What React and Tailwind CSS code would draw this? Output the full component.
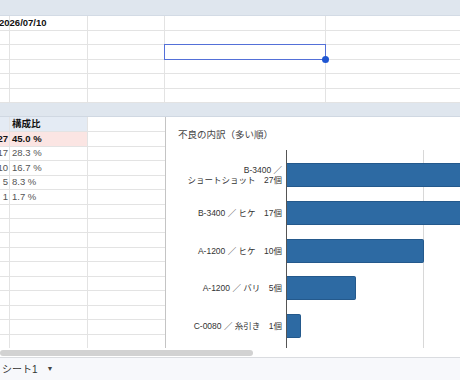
import React from "react";

const font = { fontFamily: '"Liberation Sans", Arial, "Noto Sans CJK JP", sans-serif' };

// top block cells: widths of the visible columns
const cols = "grid grid-cols-[10px_78px_77px_161px_134px]";

const summary = [
  { n: "27", p: "45.0 %", hot: true },
  { n: "17", p: "28.3 %" },
  { n: "10", p: "16.7 %" },
  { n: "5", p: "8.3 %" },
  { n: "1", p: "1.7 %" },
];

const defects = [
  { label: ["B-3400 ／", "ショートショット　27個"], count: 27 },
  { label: ["B-3400 ／ ヒケ　17個"], count: 17 },
  { label: ["A-1200 ／ ヒケ　10個"], count: 10 },
  { label: ["A-1200 ／ バリ　5個"], count: 5 },
  { label: ["C-0080 ／ 糸引き　1個"], count: 1 },
];

function TopRow({ children, selected }) {
  return (
    <div className={`${cols} h-[14.5px]`}>
      <div className="border-r border-b border-[#e3e3e3] relative overflow-visible">{children}</div>
      <div className="border-r border-b border-[#e3e3e3]" />
      <div className="border-r border-b border-[#e3e3e3]" />
      <div className={`border-r border-b border-[#e3e3e3] relative ${selected ? "z-10" : ""}`}>
        {selected && (
          <>
            <div className="absolute inset-[-1px] border border-[#5470d8]" />
            <div className="absolute right-[-4px] bottom-[-4px] w-[7px] h-[7px] rounded-full bg-[#1f56d2]" />
          </>
        )}
      </div>
      <div className="border-b border-[#e3e3e3]" />
    </div>
  );
}

function LeftRow({ n, p, hot, head }) {
  const bg = head ? "bg-[#e4ebf4]" : hot ? "bg-[#fbe5e3]" : "";
  const txt = head || hot ? "font-bold text-[#111]" : "text-[#555]";
  return (
    <div className="grid grid-cols-[10px_78px_77px] h-[14.5px] text-[9.5px] leading-[14px]">
      <div className={`border-r border-b border-[#e3e3e3] relative ${bg}`}>
        <span className={`absolute right-[1px] top-0 ${txt}`}>{n}</span>
      </div>
      <div className={`border-r border-b border-[#e3e3e3] pl-[2px] ${bg} ${txt}`}>{p}</div>
      <div className="border-b border-[#e3e3e3]" />
    </div>
  );
}

export default function App() {
  const scale = 13.7;
  return (
    <div className="w-[460px] h-[380px] overflow-hidden bg-white flex flex-col" style={font}>
      {/* frozen header band */}
      <div className="h-[16px] bg-[#dfe6ee] border-b border-[#d3dbe5]" />

      {/* upper cells */}
      <div>
        <TopRow>
          <span className="absolute left-[-1px] top-0 text-[9.5px] leading-[14px] font-bold text-[#111] whitespace-nowrap">
            2026/07/10
          </span>
        </TopRow>
        <TopRow />
        <TopRow selected />
        <TopRow />
        <TopRow />
        <TopRow />
      </div>

      {/* second band */}
      <div className="h-[14px] bg-[#dfe6ee] border-b border-[#d0d8e2]" />

      {/* lower area: cells + chart */}
      <div className="h-[231px] flex overflow-hidden">
        <div className="w-[165px] shrink-0">
          <LeftRow n="" p="構成比" head />
          {summary.map((r) => (
            <LeftRow key={r.p} n={r.n} p={r.p} hot={r.hot} />
          ))}
          {Array.from({ length: 10 }).map((_, i) => (
            <LeftRow key={i} n="" p="" />
          ))}
        </div>

        {/* chart */}
        <div className="flex-1 bg-white border-l border-[#c4c4c4] flex flex-col">
          <div className="h-[33px] pl-[12px] pt-[11px] text-[9.5px] leading-[12px] text-[#444]" style={{ fontFamily: '"Noto Sans CJK JP", sans-serif' }}>
            不良の内訳（多い順）
          </div>
          <div className="flex flex-1">
            <div className="w-[120px] shrink-0 flex flex-col pt-[13px] gap-[13.75px]">
              {defects.map((d, i) => (
                <div key={i} className="h-[24px] flex flex-col justify-center items-end pr-[4px] text-[8.5px] leading-[10px] text-[#333] whitespace-nowrap">
                  {d.label.map((l) => (
                    <span key={l}>{l}</span>
                  ))}
                </div>
              ))}
            </div>
            <div className="relative flex-1 border-l border-[#555] overflow-hidden">
              <div className="absolute left-[136px] top-0 bottom-0 w-px bg-[#d8d8d8]" />
              <div className="relative flex flex-col pt-[13px] gap-[13.75px]">
                {defects.map((d, i) => (
                  <div
                    key={i}
                    className="h-[24px] bg-[#2d6aa3] rounded-r-[2px] border border-l-0 border-[#24598c]"
                    style={{ width: d.count * scale }}
                  />
                ))}
              </div>
            </div>
          </div>
        </div>
      </div>

      {/* horizontal scrollbar */}
      <div className="h-[9px] bg-white flex items-center">
        <div className="w-[253px] h-[6px] rounded-full bg-[#d2d2d2]" />
      </div>

      {/* sheet tabs */}
      <div className="flex-1 border-t border-[#dadce0] bg-[#f7f8fb] flex items-center pl-[2px] gap-[9px] text-[10px] text-[#333]" style={{ fontFamily: '"Liberation Sans", "Noto Sans CJK JP", sans-serif' }}>
        <span>シート1</span>
        <span className="text-[7px] text-[#444]">▼</span>
      </div>
    </div>
  );
}
